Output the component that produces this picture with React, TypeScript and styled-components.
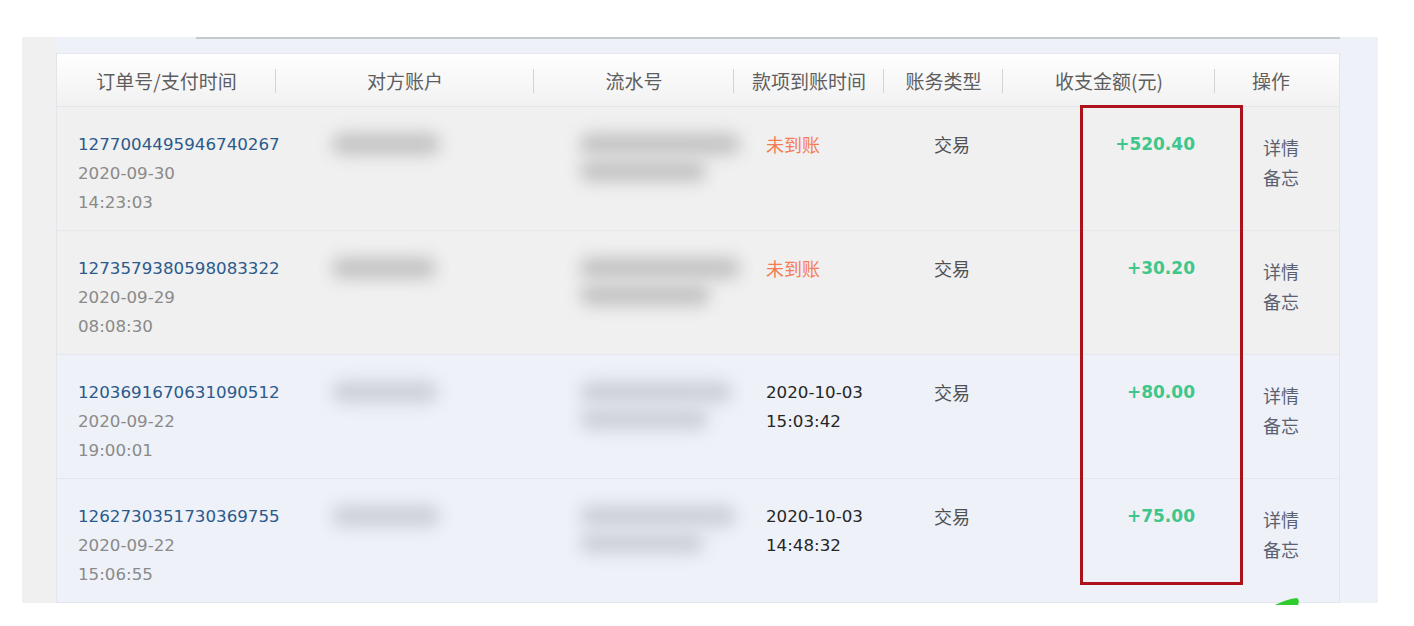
import React from "react";
import styled, { createGlobalStyle } from "styled-components";

const GlobalStyle = createGlobalStyle`
  html, body { margin: 0; padding: 0; background: #ffffff; }
  body { font-family: "DejaVu Sans", "Noto Sans CJK SC", sans-serif; }
  * { box-sizing: border-box; }
`;

const COLS = [219, 258, 200, 150, 119, 212, 126];
const GRID = COLS.map((c) => `${c}px`).join(" ");

const Page = styled.div`
  padding: 37px 0 0 22px;
  width: 1414px;
  height: 626px;
`;

const Panel = styled.div`
  display: flex;
  width: 1356px;
  height: 566px;
  background: #eef1f8;
`;

const LeftStrip = styled.div`
  width: 34px;
  background: #f0f0f0;
`;

const Main = styled.div`
  width: 1284px;
  display: flex;
  flex-direction: column;
`;

const TopRule = styled.div`
  height: 16px;
  margin-left: 140px;
  border-top: 2px solid #c6c8cf;
`;

const Table = styled.div`
  position: relative;
  border-left: 1px solid #e2e5ec;
  border-right: 1px solid #e2e5ec;
`;

const HeaderRow = styled.div`
  display: grid;
  grid-template-columns: ${GRID};
  height: 54px;
  background: linear-gradient(#ffffff, #f1f1f1);
  border-top: 1px solid #e6e8ee;
  border-bottom: 1px solid #e2e5ec;
`;

const HeadCell = styled.div<{ $sep?: boolean; $shift?: number }>`
  position: relative;
  display: flex;
  align-items: center;
  justify-content: center;
  font-family: "Noto Sans CJK SC", sans-serif;
  font-size: 19px;
  color: #5e5e5e;
  padding-right: ${(p) => (p.$shift ? p.$shift : 0)}px;
  ${(p) =>
    p.$sep
      ? `&::after {
          content: "";
          position: absolute;
          right: 0;
          top: 15px;
          height: 24px;
          width: 1px;
          background: #d4d4d4;
        }`
      : ""}
`;

const Row = styled.div<{ $tone: "grey" | "blue" }>`
  display: grid;
  grid-template-columns: ${GRID};
  height: 124px;
  background: ${(p) => (p.$tone === "grey" ? "#f0f0f0" : "#eef1f8")};
  border-bottom: 1px solid ${(p) => (p.$tone === "grey" ? "#e6e7ec" : "#e3e6ee")};
`;

const Cell = styled.div<{ $pl?: number; $pr?: number; $align?: "left" | "right" }>`
  padding-top: 23px;
  padding-left: ${(p) => p.$pl ?? 0}px;
  padding-right: ${(p) => p.$pr ?? 0}px;
  text-align: ${(p) => p.$align ?? "left"};
  display: flex;
  flex-direction: column;
  align-items: ${(p) => (p.$align === "right" ? "flex-end" : "flex-start")};
`;

const OrderNo = styled.div`
  font-size: 16.7px;
  line-height: 29px;
  color: #2b5a8c;
`;

const Stamp = styled.div`
  font-size: 16.7px;
  line-height: 29px;
  color: #8a8a8a;
`;

const Blur = styled.div<{ $w: number; $dark: boolean; $mt?: number }>`
  width: ${(p) => p.$w}px;
  height: 22px;
  margin-top: ${(p) => p.$mt ?? 6}px;
  border-radius: 10px;
  background: ${(p) => (p.$dark ? "#c4c4c4" : "#cdd0d8")};
  filter: blur(8px);
`;

const Pending = styled.div`
  font-family: "Noto Sans CJK SC", sans-serif;
  font-size: 18px;
  line-height: 29px;
  color: #f47d55;
`;

const Arrived = styled.div`
  font-size: 16.7px;
  line-height: 29px;
  color: #262626;
`;

const TypeText = styled.div`
  font-family: "Noto Sans CJK SC", sans-serif;
  font-size: 18px;
  line-height: 29px;
  color: #505050;
`;

const Amount = styled.div`
  font-size: 17px;
  font-weight: bold;
  line-height: 29px;
  color: #3fc68c;
`;

const ActionList = styled.div`
  display: flex;
  flex-direction: column;
  margin-top: 2px;
`;

const Action = styled.div`
  font-family: "Noto Sans CJK SC", sans-serif;
  font-size: 18px;
  line-height: 30px;
  color: #5a6272;
`;

const Highlight = styled.div`
  position: absolute;
  left: 1023px;
  top: 52px;
  width: 163px;
  height: 480px;
  border: 3px solid #ad111b;
  pointer-events: none;
`;

const Mark = styled.svg`
  position: absolute;
  left: 1216px;
  top: 543px;
`;

type RowData = {
  order: string;
  date: string;
  time: string;
  arrival: null | [string, string];
  amount: string;
  tone: "grey" | "blue";
  blur1: number;
  blur2: [number, number];
};

const rows: RowData[] = [
  { order: "1277004495946740267", date: "2020-09-30", time: "14:23:03", arrival: null, amount: "+520.40", tone: "grey", blur1: 108, blur2: [160, 126] },
  { order: "1273579380598083322", date: "2020-09-29", time: "08:08:30", arrival: null, amount: "+30.20", tone: "grey", blur1: 104, blur2: [160, 130] },
  { order: "1203691670631090512", date: "2020-09-22", time: "19:00:01", arrival: ["2020-10-03", "15:03:42"], amount: "+80.00", tone: "blue", blur1: 106, blur2: [152, 128] },
  { order: "1262730351730369755", date: "2020-09-22", time: "15:06:55", arrival: ["2020-10-03", "14:48:32"], amount: "+75.00", tone: "blue", blur1: 108, blur2: [156, 124] },
];

export default function App() {
  return (
    <>
      <GlobalStyle />
      <Page>
        <Panel>
          <LeftStrip />
          <Main>
            <TopRule />
            <Table>
              <HeaderRow>
                <HeadCell $sep>订单号/支付时间</HeadCell>
                <HeadCell $sep>对方账户</HeadCell>
                <HeadCell $sep>流水号</HeadCell>
                <HeadCell $sep>款项到账时间</HeadCell>
                <HeadCell $sep>账务类型</HeadCell>
                <HeadCell $sep>收支金额(元)</HeadCell>
                <HeadCell $shift={14}>操作</HeadCell>
              </HeaderRow>
              {rows.map((r) => (
                <Row key={r.order} $tone={r.tone}>
                  <Cell $pl={21}>
                    <OrderNo>{r.order}</OrderNo>
                    <Stamp>{r.date}</Stamp>
                    <Stamp>{r.time}</Stamp>
                  </Cell>
                  <Cell $pl={56}>
                    <Blur $w={r.blur1} $dark={r.tone === "grey"} $mt={3} />
                  </Cell>
                  <Cell $pl={46}>
                    <Blur $w={r.blur2[0]} $dark={r.tone === "grey"} $mt={3} />
                    <Blur $w={r.blur2[1]} $dark={r.tone === "grey"} $mt={5} />
                  </Cell>
                  <Cell $pl={32}>
                    {r.arrival ? (
                      <>
                        <Arrived>{r.arrival[0]}</Arrived>
                        <Arrived>{r.arrival[1]}</Arrived>
                      </>
                    ) : (
                      <Pending>未到账</Pending>
                    )}
                  </Cell>
                  <Cell $pl={50}>
                    <TypeText>交易</TypeText>
                  </Cell>
                  <Cell $pr={20} $align="right">
                    <Amount>{r.amount}</Amount>
                  </Cell>
                  <Cell $pl={48}>
                    <ActionList>
                      <Action>详情</Action>
                      <Action>备忘</Action>
                    </ActionList>
                  </Cell>
                </Row>
              ))}
              <Highlight />
              <Mark width="30" height="10" viewBox="0 0 30 10">
                <path d="M2 9 Q14 3 24 2 Q27 4 25 9 Z" fill="#2ecc2e" />
              </Mark>
            </Table>
          </Main>
        </Panel>
      </Page>
    </>
  );
}
